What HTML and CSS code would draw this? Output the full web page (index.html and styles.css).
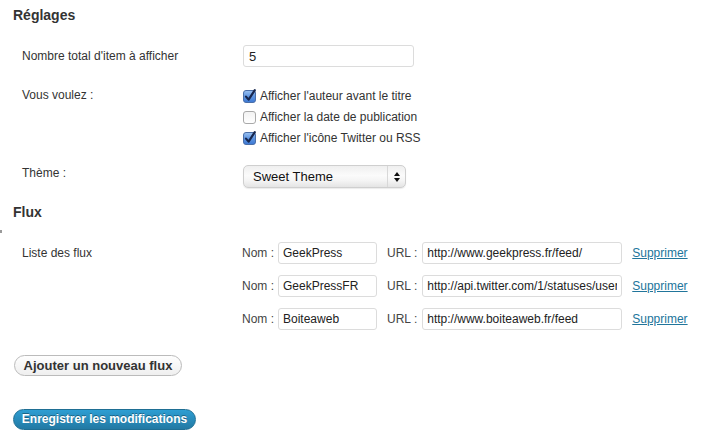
FILE: index.html
```html
<!DOCTYPE html>
<html lang="fr">
<head>
<meta charset="utf-8">
<title>Réglages</title>
<link rel="stylesheet" href="styles.css">
</head>
<body>
<div class="wrap">
  <span class="edge-dot"></span>
  <h3 class="section-title title-first">Réglages</h3>

  <div class="row row-count">
    <div class="label label-input">Nombre total d'item à afficher</div>
    <div class="field"><input class="text-input count-input" type="text" value="5"></div>
  </div>

  <div class="row row-options">
    <div class="label label-options">Vous voulez :</div>
    <div class="field options">
      <div class="option">
        <svg class="cb" width="14" height="14" viewBox="0 0 14 14"><defs><linearGradient id="cbon" x1="0" y1="0" x2="0" y2="1"><stop offset="0" stop-color="#9cc3f2"/><stop offset="0.5" stop-color="#5f95e0"/><stop offset="1" stop-color="#3b78d4"/></linearGradient></defs><rect x="0.5" y="1.5" width="12" height="12" rx="2.5" fill="url(#cbon)" stroke="#4b6fa8"/><path d="M3 7.6 L5.6 10.6 L11.8 1.2" fill="none" stroke="#16264e" stroke-width="2.2" stroke-linecap="round" stroke-linejoin="round"/></svg>
        <span>Afficher l'auteur avant le titre</span>
      </div>
      <div class="option">
        <svg class="cb" width="14" height="14" viewBox="0 0 14 14"><defs><linearGradient id="cboff" x1="0" y1="0" x2="0" y2="1"><stop offset="0" stop-color="#f2f2f2"/><stop offset="1" stop-color="#ffffff"/></linearGradient></defs><rect x="0.5" y="1.5" width="12" height="12" rx="2.5" fill="url(#cboff)" stroke="#a9a9a9"/></svg>
        <span>Afficher la date de publication</span>
      </div>
      <div class="option">
        <svg class="cb" width="14" height="14" viewBox="0 0 14 14"><rect x="0.5" y="1.5" width="12" height="12" rx="2.5" fill="url(#cbon)" stroke="#4b6fa8"/><path d="M3 7.6 L5.6 10.6 L11.8 1.2" fill="none" stroke="#16264e" stroke-width="2.2" stroke-linecap="round" stroke-linejoin="round"/></svg>
        <span>Afficher l'icône Twitter ou RSS</span>
      </div>
    </div>
  </div>

  <div class="row row-theme">
    <div class="label label-theme">Thème :</div>
    <div class="field">
      <div class="select">
        <span class="select-text">Sweet Theme</span>
        <span class="select-arrows">
          <svg width="6" height="10" viewBox="0 0 6 10"><path d="M3 0 L6 4 L0 4 Z" fill="#111"/><path d="M0 6 L6 6 L3 10 Z" fill="#111"/></svg>
        </span>
      </div>
    </div>
  </div>

  <h3 class="section-title title-flux">Flux</h3>

  <div class="row row-feeds">
    <div class="label label-input">Liste des flux</div>
    <div class="field feeds">
      <div class="feed">
        <span class="feed-lbl">Nom :</span>
        <input class="text-input name-input" type="text" value="GeekPress">
        <span class="feed-lbl url-lbl">URL :</span>
        <input class="text-input url-input" type="text" value="http://www.geekpress.fr/feed/">
        <a class="del" href="#">Supprimer</a>
      </div>
      <div class="feed">
        <span class="feed-lbl">Nom :</span>
        <input class="text-input name-input" type="text" value="GeekPressFR">
        <span class="feed-lbl url-lbl">URL :</span>
        <input class="text-input url-input" type="text" value="http://api.twitter.com/1/statuses/user_timeline.rss">
        <a class="del" href="#">Supprimer</a>
      </div>
      <div class="feed">
        <span class="feed-lbl">Nom :</span>
        <input class="text-input name-input" type="text" value="Boiteaweb">
        <span class="feed-lbl url-lbl">URL :</span>
        <input class="text-input url-input" type="text" value="http://www.boiteaweb.fr/feed">
        <a class="del" href="#">Supprimer</a>
      </div>
    </div>
  </div>

  <div class="actions">
    <button class="btn btn-secondary" type="button">Ajouter un nouveau flux</button>
    <button class="btn btn-primary" type="button">Enregistrer les modifications</button>
  </div>
</div>
</body>
</html>
```

FILE: styles.css
```css
html, body {
  margin: 0;
  padding: 0;
  background: #ffffff;
}

body {
  font-family: "Liberation Sans", Arial, sans-serif;
  font-size: 12px;
  color: #333333;
}

.wrap {
  position: relative;
  padding: 0 0 0 13px;
}

.edge-dot {
  position: absolute;
  left: 0;
  top: 230px;
  width: 2px;
  height: 3px;
  background: #9a9a9a;
}

.section-title {
  margin: 0;
  font-size: 14px;
  line-height: 18px;
  font-weight: bold;
  color: #333333;
}

.title-first {
  padding-top: 6px;
}

.title-flux {
  margin-top: 15px;
}

.row {
  display: flex;
  align-items: flex-start;
}

.label {
  width: 221px;
  padding-left: 9px;
  color: #333333;
}

.label-input {
  line-height: 22px;
}

.label-options {
  line-height: 21px;
}

.label-theme {
  line-height: 16px;
}

.row-count {
  margin-top: 21px;
}

.row-options {
  margin-top: 18px;
}

.row-theme {
  margin-top: 17px;
}

.row-feeds {
  margin-top: 21px;
}

.text-input {
  box-sizing: border-box;
  height: 22px;
  margin: 0;
  padding: 0 4px;
  border: 1px solid #dcdcdc;
  border-radius: 3px;
  background: #ffffff;
  font-family: "Liberation Sans", Arial, sans-serif;
  font-size: 12px;
  color: #222222;
  outline: none;
}

.count-input {
  width: 171px;
  padding-left: 5px;
  font-size: 13px;
}

.options {
  display: flex;
  flex-direction: column;
}

.option {
  display: flex;
  align-items: center;
  height: 21px;
  color: #333333;
}

.cb {
  display: block;
  margin-right: 3px;
  flex: none;
}

.select {
  box-sizing: border-box;
  display: flex;
  align-items: center;
  width: 163px;
  height: 23px;
  border: 1px solid #cfcfcf;
  border-radius: 5px;
  background: linear-gradient(to bottom, #efefef 0%, #fbfbfb 45%, #f4f4f4 70%, #e4e4e4 100%);
  box-shadow: 0 1px 1px rgba(0, 0, 0, 0.08);
}

.select-text {
  flex: 1;
  padding-left: 9px;
  font-size: 13px;
  color: #111111;
}

.select-arrows {
  display: flex;
  align-items: center;
  justify-content: center;
  width: 17px;
  height: 100%;
  border-left: 1px solid #d8d8d8;
}

.select-arrows svg {
  display: block;
}

.feeds {
  display: flex;
  flex-direction: column;
  gap: 11px;
  margin-left: -1px;
}

.feed {
  display: flex;
  align-items: center;
  height: 22px;
}

.feed-lbl {
  color: #444444;
  margin-right: 4px;
}

.url-lbl {
  margin-left: 10px;
  margin-right: 5px;
}

.name-input {
  width: 99px;
}

.url-input {
  width: 200px;
}

.del {
  margin-left: 10px;
  color: #21759b;
  text-decoration: underline;
}

.actions {
  display: flex;
  flex-direction: column;
  align-items: flex-start;
  margin-top: 25px;
}

.btn {
  box-sizing: border-box;
  height: 21px;
  margin: 0;
  padding: 0;
  border-radius: 11px;
  font-family: "Liberation Sans", Arial, sans-serif;
  font-weight: bold;
  line-height: 19px;
  white-space: nowrap;
  text-align: center;
  cursor: pointer;
}

.btn-secondary {
  width: 168px;
  margin-left: 1px;
  border: 1px solid #bbbbbb;
  background: linear-gradient(to bottom, #fefefe, #efefef);
  color: #333333;
  font-size: 13px;
}

.btn-primary {
  width: 183px;
  margin-top: 33px;
  border: 1px solid #1f6f94;
  background: linear-gradient(to bottom, #2e9ed3, #2279a3);
  color: #ffffff;
  font-size: 12px;
  text-shadow: 0 -1px 0 rgba(0, 0, 0, 0.35);
}
```
